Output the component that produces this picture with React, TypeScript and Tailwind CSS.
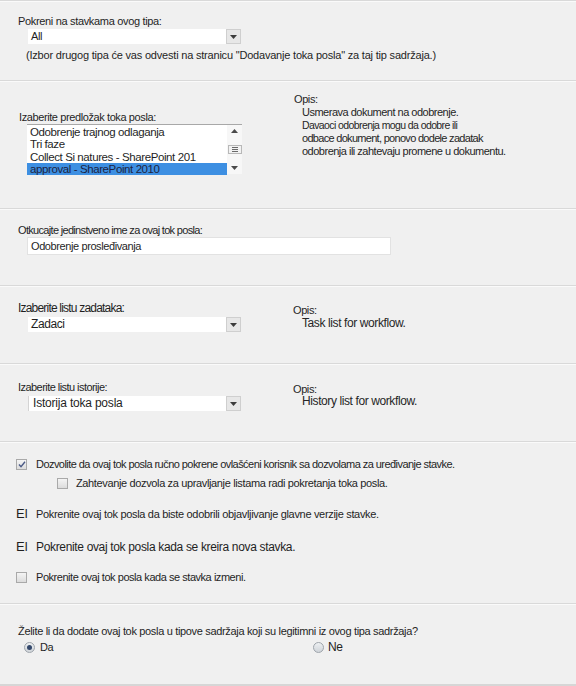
import type { ReactNode } from 'react';

function Separator() {
  return <div className="h-px bg-[#d9d9d9] shadow-[0_1px_0_#fafafa]" />;
}

function Select({ value, className = '' }: { value: string; className?: string }) {
  return (
    <div className={`flex h-[15px] w-[213px] items-stretch bg-white ${className}`}>
      <span className="flex-1 truncate pl-[3px] leading-[15px]">{value}</span>
      <span className="flex w-[15px] items-center justify-center border border-[#cfcfcf] bg-[#e7e7e7]">
        <svg width="7" height="4" viewBox="0 0 7 4">
          <path d="M0 0h7L3.5 4z" fill="#3c3c3c" />
        </svg>
      </span>
    </div>
  );
}

function Checkbox({ checked = false }: { checked?: boolean }) {
  return (
    <span className="flex h-[11px] w-[11px] shrink-0 items-center justify-center border border-[#a9a9a9] bg-gradient-to-b from-[#f4f4f4] to-[#dcdcdc]">
      {checked && (
        <svg width="8" height="7" viewBox="0 0 8 7">
          <path d="M1 3.5l2 2.2L7 0.8" stroke="#4b5a86" strokeWidth="1.4" fill="none" />
        </svg>
      )}
    </span>
  );
}

function Radio({ checked = false }: { checked?: boolean }) {
  return (
    <span className="flex h-[11px] w-[11px] shrink-0 items-center justify-center rounded-full border border-[#9ea4ab] bg-gradient-to-b from-[#eef0f2] to-[#cfd4d9]">
      {checked && <span className="h-[5px] w-[5px] rounded-full bg-[#34486b]" />}
    </span>
  );
}

function Row({ children, className = '' }: { children: ReactNode; className?: string }) {
  return <div className={`flex h-[14px] items-center ${className}`}>{children}</div>;
}

const listItems = ['Odobrenje trajnog odlaganja', 'Tri faze', 'Collect Si natures - SharePoint 201'];

export default function App() {
  return (
    <div className="h-[686px] w-[576px] overflow-hidden bg-[#f0f0f0] font-['Liberation_Sans',Arial,sans-serif] text-[11px] tracking-[-0.4px] text-[#1f1f1f]">
      {/* tip stavke */}
      <section className="h-[80px]">
        <Separator />
        <div className="pl-[18px] pt-[13px]">
          <div className="h-[14px] leading-[14px] tracking-[-0.33px]">Pokreni na stavkama ovog tipa:</div>
          <Select value="All" className="ml-[10px] mt-px" />
          <div className="ml-[8px] mt-[4px] h-[14px] leading-[14px] tracking-[-0.2px]">
            (Izbor drugog tipa će vas odvesti na stranicu "Dodavanje toka posla" za taj tip sadržaja.)
          </div>
        </div>
      </section>

      {/* predložak */}
      <section className="h-[128px]">
        <Separator />
        <div className="flex">
          <div className="w-[276px] pl-[19px] pt-[30px]">
            <div className="h-[13px] leading-[13px]">Izaberite predložak toka posla:</div>
            <div className="ml-[8px] flex h-[50px] w-[215px] border-t border-[#a8a8a8] bg-white">
              <div className="flex-1 pt-px text-[11.5px] tracking-[-0.4px]">
                {listItems.map((item) => (
                  <div key={item} className="h-[12.3px] truncate pl-[3px] leading-[12.3px]">
                    {item}
                  </div>
                ))}
                <div className="h-[12.5px] truncate bg-[#3d8fe2] pl-[3px] leading-[12.5px] text-[#1d2340]">
                  approval - SharePoint 2010
                </div>
              </div>
              <div className="flex w-[15px] flex-col items-center justify-between bg-[#f7f7f7] py-[4px]">
                <svg width="7" height="4" viewBox="0 0 7 4">
                  <path d="M0 4h7L3.5 0z" fill="#4a4a4a" />
                </svg>
                <span className="flex h-[9px] w-[14px] flex-col items-center justify-center gap-px border border-[#b8b8b8] bg-[#f2f2f2]">
                  <span className="h-px w-[6px] bg-[#6a6a6a]" />
                  <span className="h-px w-[6px] bg-[#6a6a6a]" />
                  <span className="h-px w-[6px] bg-[#6a6a6a]" />
                </span>
                <svg width="7" height="4" viewBox="0 0 7 4">
                  <path d="M0 0h7L3.5 4z" fill="#4a4a4a" />
                </svg>
              </div>
            </div>
          </div>
          <div className="pt-[12px] text-[#262626]">
            <div className="ml-[18px] h-[13px] leading-[13px]">Opis:</div>
            <div className="ml-[26px] leading-[13px]">
              <div className="tracking-[-0.5px]">Usmerava dokument na odobrenje.</div>
              <div className="text-[10.5px] tracking-[-0.6px]">Davaoci odobrenja mogu da odobre ili</div>
              <div className="tracking-[-0.7px]">odbace dokument, ponovo dodele zadatak</div>
              <div className="tracking-[-0.5px]">odobrenja ili zahtevaju promene u dokumentu.</div>
            </div>
          </div>
        </div>
      </section>

      {/* ime */}
      <section className="h-[77px]">
        <Separator />
        <div className="pl-[18px] pt-[14px]">
          <div className="h-[14px] leading-[14px] tracking-[-0.68px]">Otkucajte jedinstveno ime za ovaj tok posla:</div>
          <div className="ml-[9px] h-[18px] w-[364px] border border-[#e2e2e2] bg-white pl-[3px] leading-[16px]">
            Odobrenje prosleđivanja
          </div>
        </div>
      </section>

      {/* lista zadataka */}
      <section className="h-[78px]">
        <Separator />
        <div className="flex">
          <div className="w-[276px] pl-[18px] pt-[15px]">
            <div className="h-[14px] text-[12px] leading-[14px] tracking-[-0.8px]">Izaberite listu zadataka:</div>
            <Select value="Zadaci" className="ml-[10px] mt-[2px] text-[12px]" />
          </div>
          <div className="pt-[18px] text-[#262626]">
            <div className="ml-[17px] h-[13px] leading-[13px]">Opis:</div>
            <div className="ml-[26px] h-[13px] text-[12px] leading-[13px]">Task list for workflow.</div>
          </div>
        </div>
      </section>

      {/* lista istorije */}
      <section className="h-[78px]">
        <Separator />
        <div className="flex">
          <div className="w-[276px] pl-[18px] pt-[16px]">
            <div className="h-[14px] leading-[14px] tracking-[-0.55px]">Izaberite listu istorije:</div>
            <div className="ml-[10px] mt-[2px] flex h-[15px] w-[213px] items-stretch border-l border-[#d4d4d4] bg-white">
              <span className="flex-1 truncate pl-[4px] text-[12px] leading-[15px] tracking-[-0.2px]">Istorija toka posla</span>
              <span className="flex w-[15px] items-center justify-center border border-[#cfcfcf] bg-[#e7e7e7]">
                <svg width="7" height="4" viewBox="0 0 7 4">
                  <path d="M0 0h7L3.5 4z" fill="#3c3c3c" />
                </svg>
              </span>
            </div>
          </div>
          <div className="pt-[19px] text-[#262626]">
            <div className="ml-[17px] h-[12px] leading-[12px]">Opis:</div>
            <div className="ml-[26px] h-[13px] text-[12px] leading-[13px]">History list for workflow.</div>
          </div>
        </div>
      </section>

      {/* pokretanje */}
      <section className="h-[162px]">
        <Separator />
        <div className="pl-[16px] pt-[15px]">
          <Row className="gap-[9px] tracking-[-0.55px]">
            <Checkbox checked />
            <span>Dozvolite da ovaj tok posla ručno pokrene ovlašćeni korisnik sa dozvolama za uređivanje stavke.</span>
          </Row>
          <Row className="ml-[41px] mt-[5px] gap-[8px] tracking-[-0.36px]">
            <Checkbox />
            <span>Zahtevanje dozvola za upravljanje listama radi pokretanja toka posla.</span>
          </Row>
          <Row className="mt-[17px] gap-[9px] tracking-[-0.32px]">
            <span className="w-[11px] text-[13px] tracking-normal">El</span>
            <span>Pokrenite ovaj tok posla da biste odobrili objavljivanje glavne verzije stavke.</span>
          </Row>
          <Row className="mt-[19px] gap-[9px] text-[12px] tracking-[-0.34px]">
            <span className="w-[11px] text-[13px] tracking-normal">El</span>
            <span>Pokrenite ovaj tok posla kada se kreira nova stavka.</span>
          </Row>
          <Row className="mt-[16px] gap-[9px] tracking-[-0.46px]">
            <Checkbox />
            <span>Pokrenite ovaj tok posla kada se stavka izmeni.</span>
          </Row>
        </div>
      </section>

      {/* tipovi sadržaja */}
      <section className="h-[81px]">
        <Separator />
        <div className="pl-[18px] pt-[20px]">
          <div className="h-[14px] leading-[14px] tracking-[-0.33px]">
            Želite li da dodate ovaj tok posla u tipove sadržaja koji su legitimni iz ovog tipa sadržaja?
          </div>
          <div className="mt-[2px] flex h-[14px] items-center">
            <div className="flex w-[295px] items-center gap-[5px] pl-[6px]">
              <Radio checked />
              <span>Da</span>
            </div>
            <div className="flex items-center gap-[4px]">
              <Radio />
              <span className="text-[12px]">Ne</span>
            </div>
          </div>
        </div>
      </section>
      <div className="h-[2px] bg-[#d6d6d6]" />
    </div>
  );
}
